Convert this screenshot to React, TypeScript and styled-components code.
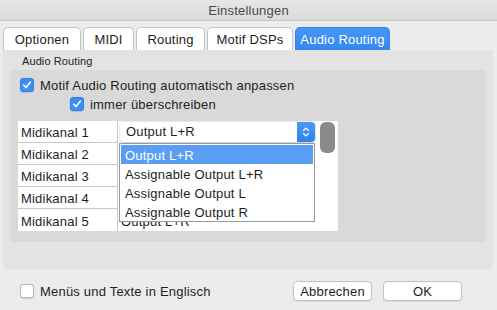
import React from 'react';
import styled, { createGlobalStyle } from 'styled-components';

const GlobalStyle = createGlobalStyle`
  html, body {
    margin: 0;
    padding: 0;
    background: #ececec;
  }
  body {
    font-family: "Liberation Sans", Arial, sans-serif;
    font-size: 13px;
    letter-spacing: 0.2px;
    color: #1e1e1e;
  }
`;

const tabs = [
  { label: 'Optionen', width: 78 },
  { label: 'MIDI', width: 51 },
  { label: 'Routing', width: 69 },
  { label: 'Motif DSPs', width: 86 },
  { label: 'Audio Routing', width: 95 },
];
const channels = [1, 2, 3, 4, 5];
const options = ['Output L+R', 'Assignable Output L+R', 'Assignable Output L', 'Assignable Output R'];

const CheckMark: React.FC = () => (
  <svg width="10" height="10" viewBox="0 0 10 10">
    <path d="M1.8 5.2 L4 7.6 L8.3 2.2" fill="none" stroke="#fff" strokeWidth="1.6" strokeLinecap="round" strokeLinejoin="round" />
  </svg>
);

const App: React.FC = () => {
  return (
    <Window>
      <GlobalStyle />
      <TitleBar>Einstellungen</TitleBar>

      <TabRow>
        {tabs.map((t) => (
          <Tab key={t.label} $width={t.width} $active={t.label === 'Audio Routing'}>{t.label}</Tab>
        ))}
      </TabRow>

      <Panel>
        <GroupLabel>Audio Routing</GroupLabel>
        <GroupBox>
          <CheckRow $indent={10}>
            <Box $checked><CheckMark /></Box>
            <span>Motif Audio Routing automatisch anpassen</span>
          </CheckRow>
          <CheckRow $indent={60}>
            <Box $checked><CheckMark /></Box>
            <span>immer überschreiben</span>
          </CheckRow>

          <Table>
            <Rows>
              {channels.map((c) => (
                <Row key={c}>
                  <NameCell $last={c === 5}>Midikanal {c}</NameCell>
                  <ValueCell>
                    {c === 1 && (
                      <Select>
                        <span>Output L+R</span>
                        <ArrowButton>
                          <svg width="8" height="12" viewBox="0 0 8 12">
                            <path d="M1.5 4.5 L4 2 L6.5 4.5 M1.5 7.5 L4 10 L6.5 7.5" fill="none" stroke="#fff" strokeWidth="1.1" strokeLinecap="round" strokeLinejoin="round" />
                          </svg>
                        </ArrowButton>
                      </Select>
                    )}
                    {c === 5 && <CellText>Output L+R</CellText>}
                  </ValueCell>
                </Row>
              ))}
            </Rows>
            <ScrollTrack>
              <ScrollThumb />
            </ScrollTrack>

            <Dropdown>
              {options.map((o, i) => (
                <Option key={o} $selected={i === 0}>{o}</Option>
              ))}
            </Dropdown>
          </Table>
        </GroupBox>
      </Panel>

      <Footer>
        <FooterCheck>
          <Box />
          <span>Menüs und Texte in Englisch</span>
        </FooterCheck>
        <Buttons>
          <Button>Abbrechen</Button>
          <Button>OK</Button>
        </Buttons>
      </Footer>
    </Window>
  );
};

const Window = styled.div`
  width: 497px;
  height: 310px;
  display: flex;
  flex-direction: column;
  background: #ececec;
  overflow: hidden;
`;

const TitleBar = styled.div`
  height: 20px;
  display: flex;
  align-items: center;
  justify-content: center;
  background: linear-gradient(#e6e6e6, #dcdcdc);
  border-bottom: 1px solid #c6c6c6;
  color: #4b4b4b;
  font-size: 13px;
`;

const TabRow = styled.div`
  display: flex;
  gap: 2px;
  margin-top: 6px;
  padding-left: 3px;
  height: 23px;
`;

const Tab = styled.div<{ $active?: boolean; $width: number }>`
  width: ${(p) => p.$width}px;
  box-sizing: border-box;
  display: flex;
  align-items: center;
  justify-content: center;
  padding-top: 1px;
  font-size: 13px;
  white-space: nowrap;
  border: 1px solid ${(p) => (p.$active ? '#3a84e6' : '#c4c4c4')};
  border-bottom: none;
  border-radius: 5px 5px 0 0;
  background: ${(p) => (p.$active ? 'linear-gradient(#4596f6, #3488f2)' : '#ffffff')};
  color: ${(p) => (p.$active ? '#ffffff' : '#1e1e1e')};
`;

const Panel = styled.div`
  margin: 0 4px 0 3px;
  height: 220px;
  background: #e3e3e3;
  border-radius: 0 0 5px 5px;
  box-sizing: border-box;
  display: flex;
  flex-direction: column;
`;

const GroupLabel = styled.div`
  font-size: 11px;
  letter-spacing: 0.1px;
  padding: 5px 0 0 19px;
  height: 15px;
  color: #222;
`;

const GroupBox = styled.div`
  margin: 0 7px;
  height: 172px;
  background: #d9d9d9;
  border-radius: 5px;
  box-sizing: border-box;
  padding-top: 7px;
  display: flex;
  flex-direction: column;
`;

const CheckRow = styled.label<{ $indent: number }>`
  display: flex;
  align-items: center;
  gap: 6px;
  height: 16px;
  margin-bottom: 3px;
  padding-left: ${(p) => p.$indent}px;
  font-size: 13px;
`;

const Box = styled.span<{ $checked?: boolean }>`
  width: 14px;
  height: 14px;
  box-sizing: border-box;
  border-radius: 3px;
  display: inline-flex;
  align-items: center;
  justify-content: center;
  background: ${(p) => (p.$checked ? '#3b8ef4' : '#ffffff')};
  border: 1px solid ${(p) => (p.$checked ? '#2f80e8' : '#b8b8b8')};
  box-shadow: 0 0.5px 1px rgba(0, 0, 0, 0.12);
`;

const Table = styled.div`
  position: relative;
  margin: 6px 0 0 8px;
  width: 320px;
  display: flex;
  background: #ffffff;
`;

const Rows = styled.div`
  display: flex;
  flex-direction: column;
  width: 302px;
`;

const Row = styled.div`
  display: flex;
  height: 22px;
`;

const NameCell = styled.div<{ $last?: boolean }>`
  width: 100px;
  box-sizing: border-box;
  padding: 2px 0 0 3px;
  display: flex;
  align-items: center;
  border-right: 1px solid #c8c8c8;
  border-bottom: ${(p) => (p.$last ? 'none' : '1px solid #c8c8c8')};
  font-size: 13px;
`;

const ValueCell = styled.div`
  flex: 1;
  display: flex;
  align-items: center;
  padding-left: 2px;
`;

const CellText = styled.span`
  padding: 3px 0 0 1px;
  font-size: 13px;
`;

const Select = styled.div`
  width: 195px;
  height: 20px;
  margin-top: -1px;
  display: flex;
  align-items: center;
  justify-content: space-between;
  background: #ffffff;
  border-radius: 4px;
  box-shadow: 0 0 0 0.5px rgba(0, 0, 0, 0.15), 0 1px 1px rgba(0, 0, 0, 0.12);
  padding-left: 6px;
  box-sizing: border-box;
  font-size: 13px;
`;

const ArrowButton = styled.span`
  width: 18px;
  height: 20px;
  border-radius: 0 4px 4px 0;
  background: linear-gradient(#4b9bf7, #2f82ef);
  display: flex;
  align-items: center;
  justify-content: center;
`;

const ScrollTrack = styled.div`
  width: 18px;
  padding: 1px 0 0 0;
  box-sizing: border-box;
`;

const ScrollThumb = styled.div`
  width: 15px;
  height: 31px;
  border-radius: 6px;
  background: #8b8b8b;
`;

const Dropdown = styled.div`
  position: absolute;
  left: 101px;
  top: 22px;
  width: 196px;
  height: 79px;
  box-sizing: border-box;
  background: #ffffff;
  border: 1px solid #9a9a9a;
  padding: 1px 1px 0;
  display: flex;
  flex-direction: column;
`;

const Option = styled.div<{ $selected?: boolean }>`
  height: 19px;
  display: flex;
  align-items: center;
  padding: 1px 0 0 4px;
  box-sizing: border-box;
  font-size: 13px;
  background: ${(p) => (p.$selected ? '#5a9ef5' : 'transparent')};
  color: ${(p) => (p.$selected ? '#ffffff' : '#1e1e1e')};
`;

const Footer = styled.div`
  flex: 1;
  display: flex;
  align-items: center;
  justify-content: space-between;
  padding: 2px 35px 0 20px;
`;

const FooterCheck = styled.label`
  display: flex;
  align-items: center;
  gap: 6px;
  font-size: 13px;
`;

const Buttons = styled.div`
  display: flex;
  gap: 11px;
`;

const Button = styled.button`
  width: 79px;
  height: 20px;
  padding: 0;
  background: #ffffff;
  border: 1px solid #c2c2c2;
  border-radius: 4px;
  box-shadow: 0 1px 1px rgba(0, 0, 0, 0.08);
  font-family: "Liberation Sans", Arial, sans-serif;
  font-size: 13px;
  letter-spacing: 0.2px;
  color: #1e1e1e;
`;

export default App;
